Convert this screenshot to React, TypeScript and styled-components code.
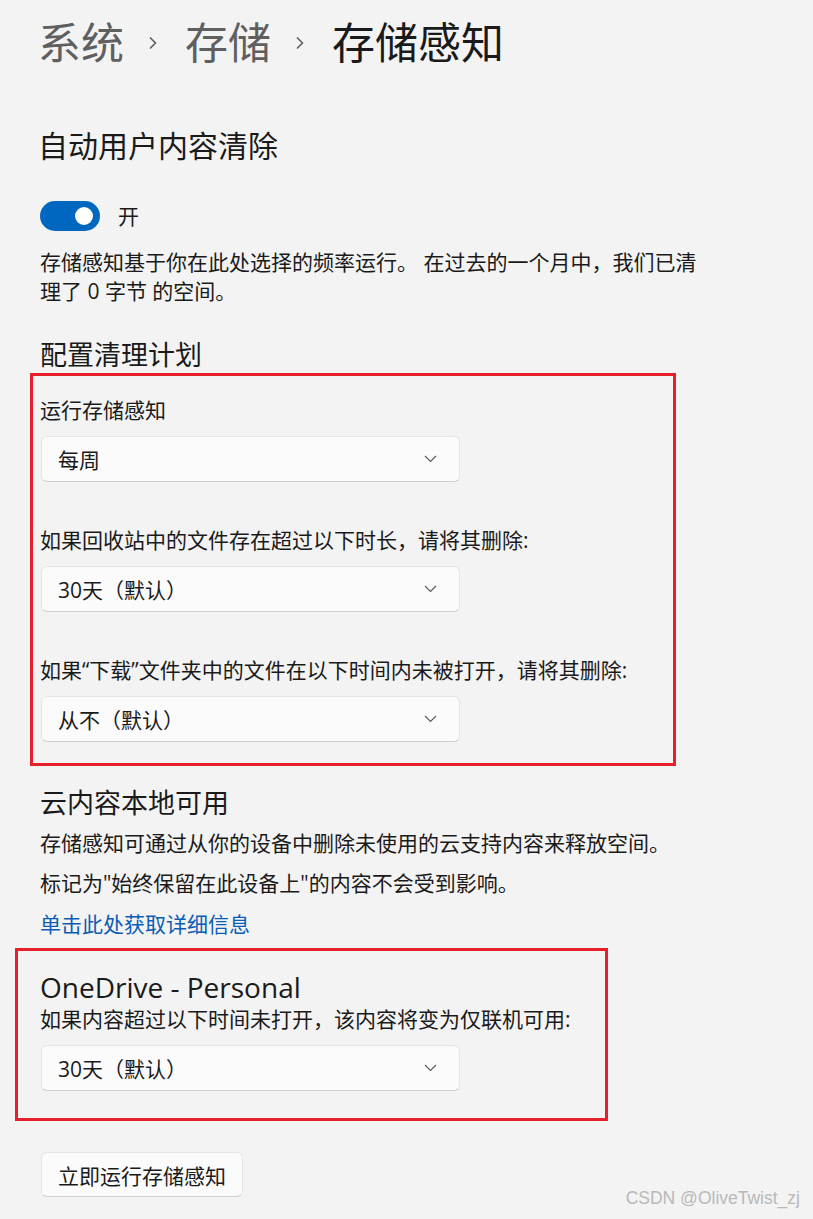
import React from "react";
import styled, { createGlobalStyle } from "styled-components";

const GlobalStyle = createGlobalStyle`
  html, body {
    margin: 0;
    padding: 0;
    background: #f3f3f3;
  }
  body {
    font-family: "Open Sans", "Noto Sans CJK SC", sans-serif;
    color: #1a1a1a;
  }
`;

const Page = styled.div`
  position: relative;
  width: 813px;
  height: 1219px;
  box-sizing: border-box;
  padding: 15px 0 0 40px;
  background: #f3f3f3;
  overflow: hidden;
`;

const Breadcrumb = styled.div`
  display: flex;
  align-items: center;
  height: 56px;
  font-size: 43px;
  line-height: 56px;
  margin-left: -2px;
`;

const Crumb = styled.span<{ $current?: boolean }>`
  color: ${({ $current }) => ($current ? "#1a1a1a" : "#5f5f5f")};
`;

const CrumbSep = styled.svg`
  width: 10px;
  height: 14px;
  margin: 0 27px 0 24px;
  flex-shrink: 0;
`;

const SectionTitle = styled.h2<{ $size?: number }>`
  margin: 0;
  font-weight: 400;
  font-size: ${({ $size }) => $size ?? 27}px;
  line-height: 36px;
`;

const ToggleRow = styled.div`
  display: flex;
  align-items: center;
  gap: 18px;
  height: 30px;
  margin-top: 37px;
`;

const Toggle = styled.div`
  width: 60px;
  height: 30px;
  border-radius: 15px;
  background: #0067c0;
  display: flex;
  align-items: center;
  justify-content: flex-end;
  padding-right: 7px;
  box-sizing: border-box;
`;

const Knob = styled.div`
  width: 18px;
  height: 18px;
  border-radius: 50%;
  background: #ffffff;
`;

const Text = styled.p<{ $mt?: number; $width?: number }>`
  margin: ${({ $mt }) => $mt ?? 0}px 0 0;
  font-size: 21px;
  line-height: 29px;
  max-width: ${({ $width }) => ($width ? `${$width}px` : "none")};
`;

const ToggleLabel = styled.span`
  font-size: 21px;
  line-height: 30px;
`;

const Link = styled.a`
  display: block;
  margin-top: 12px;
  font-size: 21px;
  line-height: 29px;
  color: #0a5cb4;
  text-decoration: none;
`;

const Highlight = styled.div<{ $left: number; $width: number; $pt: number; $pb: number }>`
  margin-left: -${({ $left }) => $left}px;
  width: ${({ $width }) => $width}px;
  box-sizing: border-box;
  border: 3px solid #e5202a;
  padding: ${({ $pt }) => $pt}px 0 ${({ $pb }) => $pb}px ${({ $left }) => $left - 3}px;
`;

const Field = styled.div<{ $mt?: number }>`
  margin-top: ${({ $mt }) => $mt ?? 0}px;
`;

const FieldLabel = styled.div`
  font-size: 21px;
  line-height: 29px;
  margin-bottom: 11px;
`;

const Select = styled.div`
  width: 419px;
  height: 46px;
  box-sizing: border-box;
  margin-left: 1px;
  display: flex;
  align-items: center;
  justify-content: space-between;
  padding: 0 22px 0 16px;
  background: #fbfbfb;
  border: 1px solid #e5e5e5;
  border-bottom-color: #cfcfcf;
  border-radius: 6px;
  font-size: 21px;
  color: #1a1a1a;
`;

const Chevron = styled.svg`
  width: 13px;
  height: 8px;
`;

const Button = styled.button`
  margin: 31px 0 0 1px;
  height: 45px;
  padding: 0 16px;
  background: #fbfbfb;
  border: 1px solid #e5e5e5;
  border-bottom-color: #cfcfcf;
  border-radius: 6px;
  font-family: "Open Sans", "Noto Sans CJK SC", sans-serif;
  font-size: 21px;
  color: #1a1a1a;
`;

const Watermark = styled.div`
  position: absolute;
  right: 13px;
  bottom: 10px;
  font-family: "Liberation Sans", Arial, sans-serif;
  font-size: 17.5px;
  color: #b9b9b9;
`;

function Dropdown({ value }: { value: string }) {
  return (
    <Select>
      <span>{value}</span>
      <Chevron viewBox="0 0 13 8">
        <path d="M1 1 L6.5 6.5 L12 1" fill="none" stroke="#5c5c5c" strokeWidth="1.2" />
      </Chevron>
    </Select>
  );
}

function Sep() {
  return (
    <CrumbSep viewBox="0 0 10 14">
      <path d="M2 1.5 L7.5 7 L2 12.5" fill="none" stroke="#5f5f5f" strokeWidth="1.6" />
    </CrumbSep>
  );
}

export default function App() {
  return (
    <>
      <GlobalStyle />
      <Page>
        <Breadcrumb>
          <Crumb>系统</Crumb>
          <Sep />
          <Crumb>存储</Crumb>
          <Sep />
          <Crumb $current>存储感知</Crumb>
        </Breadcrumb>

        <SectionTitle $size={30} style={{ marginTop: 57, marginLeft: -2 }}>
          自动用户内容清除
        </SectionTitle>

        <ToggleRow>
          <Toggle>
            <Knob />
          </Toggle>
          <ToggleLabel>开</ToggleLabel>
        </ToggleRow>

        <Text $mt={17} $width={665}>
          存储感知基于你在此处选择的频率运行。 在过去的一个月中，我们已清理了 0 字节 的空间。
        </Text>

        <SectionTitle style={{ marginTop: 31 }}>配置清理计划</SectionTitle>

        <Highlight $left={10} $width={646} $pt={20} $pb={21}>
          <Field>
            <FieldLabel>运行存储感知</FieldLabel>
            <Dropdown value="每周" />
          </Field>
          <Field $mt={44}>
            <FieldLabel>如果回收站中的文件存在超过以下时长，请将其删除:</FieldLabel>
            <Dropdown value="30天（默认）" />
          </Field>
          <Field $mt={44}>
            <FieldLabel>如果“下载”文件夹中的文件在以下时间内未被打开，请将其删除:</FieldLabel>
            <Dropdown value="从不（默认）" />
          </Field>
        </Highlight>

        <SectionTitle style={{ marginTop: 19 }}>云内容本地可用</SectionTitle>
        <Text $mt={8}>存储感知可通过从你的设备中删除未使用的云支持内容来释放空间。</Text>
        <Text $mt={11}>标记为"始终保留在此设备上"的内容不会受到影响。</Text>
        <Link href="#">单击此处获取详细信息</Link>

        <Highlight $left={25} $width={593} $pt={18} $pb={27} style={{ marginTop: 9 }}>
          <SectionTitle $size={28}>OneDrive - Personal</SectionTitle>
          <FieldLabel>如果内容超过以下时间未打开，该内容将变为仅联机可用:</FieldLabel>
          <Dropdown value="30天（默认）" />
        </Highlight>

        <Button>立即运行存储感知</Button>

        <Watermark>CSDN @OliveTwist_zj</Watermark>
      </Page>
    </>
  );
}
